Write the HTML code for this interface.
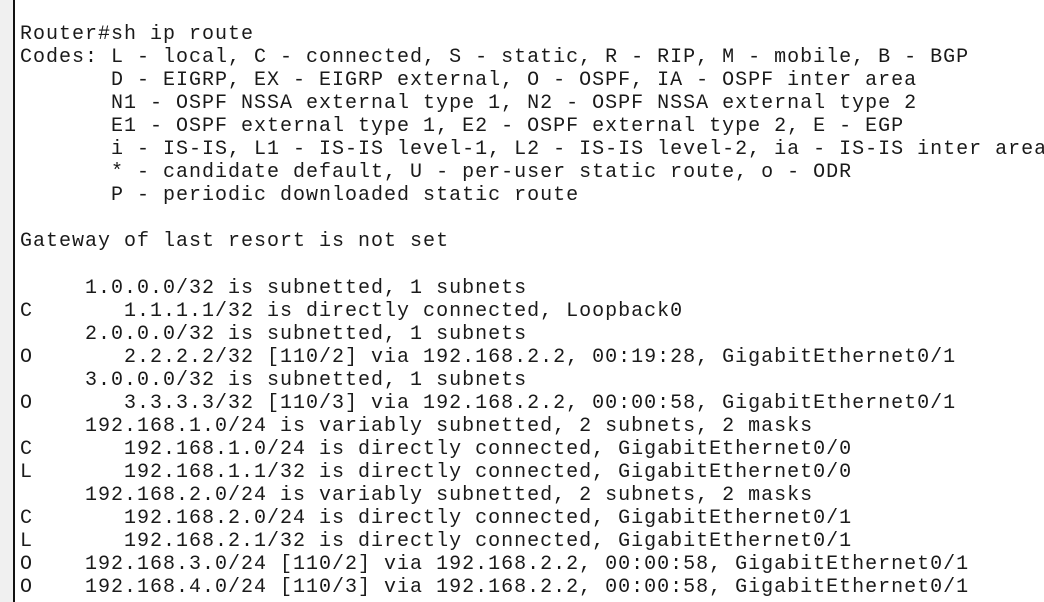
<!DOCTYPE html>
<html><head><meta charset="utf-8"><style>
html,body{margin:0;padding:0;width:1044px;height:602px;overflow:hidden;background:#fff;}
.gut{position:absolute;left:0;top:0;width:13px;height:602px;background:#f0f0f0;}
.bar{position:absolute;left:13px;top:0;width:2px;height:602px;background:#111;}
pre{position:absolute;left:20px;top:23px;margin:0;font-family:"Liberation Mono",monospace;font-size:20px;letter-spacing:1px;line-height:23.05px;color:#1a1a1a;white-space:pre;}
</style></head><body>
<div class="gut"></div><div class="bar"></div>
<pre>Router#sh ip route
Codes: L - local, C - connected, S - static, R - RIP, M - mobile, B - BGP
       D - EIGRP, EX - EIGRP external, O - OSPF, IA - OSPF inter area
       N1 - OSPF NSSA external type 1, N2 - OSPF NSSA external type 2
       E1 - OSPF external type 1, E2 - OSPF external type 2, E - EGP
       i - IS-IS, L1 - IS-IS level-1, L2 - IS-IS level-2, ia - IS-IS inter area
       * - candidate default, U - per-user static route, o - ODR
       P - periodic downloaded static route

Gateway of last resort is not set

     1.0.0.0/32 is subnetted, 1 subnets
C       1.1.1.1/32 is directly connected, Loopback0
     2.0.0.0/32 is subnetted, 1 subnets
O       2.2.2.2/32 [110/2] via 192.168.2.2, 00:19:28, GigabitEthernet0/1
     3.0.0.0/32 is subnetted, 1 subnets
O       3.3.3.3/32 [110/3] via 192.168.2.2, 00:00:58, GigabitEthernet0/1
     192.168.1.0/24 is variably subnetted, 2 subnets, 2 masks
C       192.168.1.0/24 is directly connected, GigabitEthernet0/0
L       192.168.1.1/32 is directly connected, GigabitEthernet0/0
     192.168.2.0/24 is variably subnetted, 2 subnets, 2 masks
C       192.168.2.0/24 is directly connected, GigabitEthernet0/1
L       192.168.2.1/32 is directly connected, GigabitEthernet0/1
O    192.168.3.0/24 [110/2] via 192.168.2.2, 00:00:58, GigabitEthernet0/1
O    192.168.4.0/24 [110/3] via 192.168.2.2, 00:00:58, GigabitEthernet0/1</pre>
</body></html>
